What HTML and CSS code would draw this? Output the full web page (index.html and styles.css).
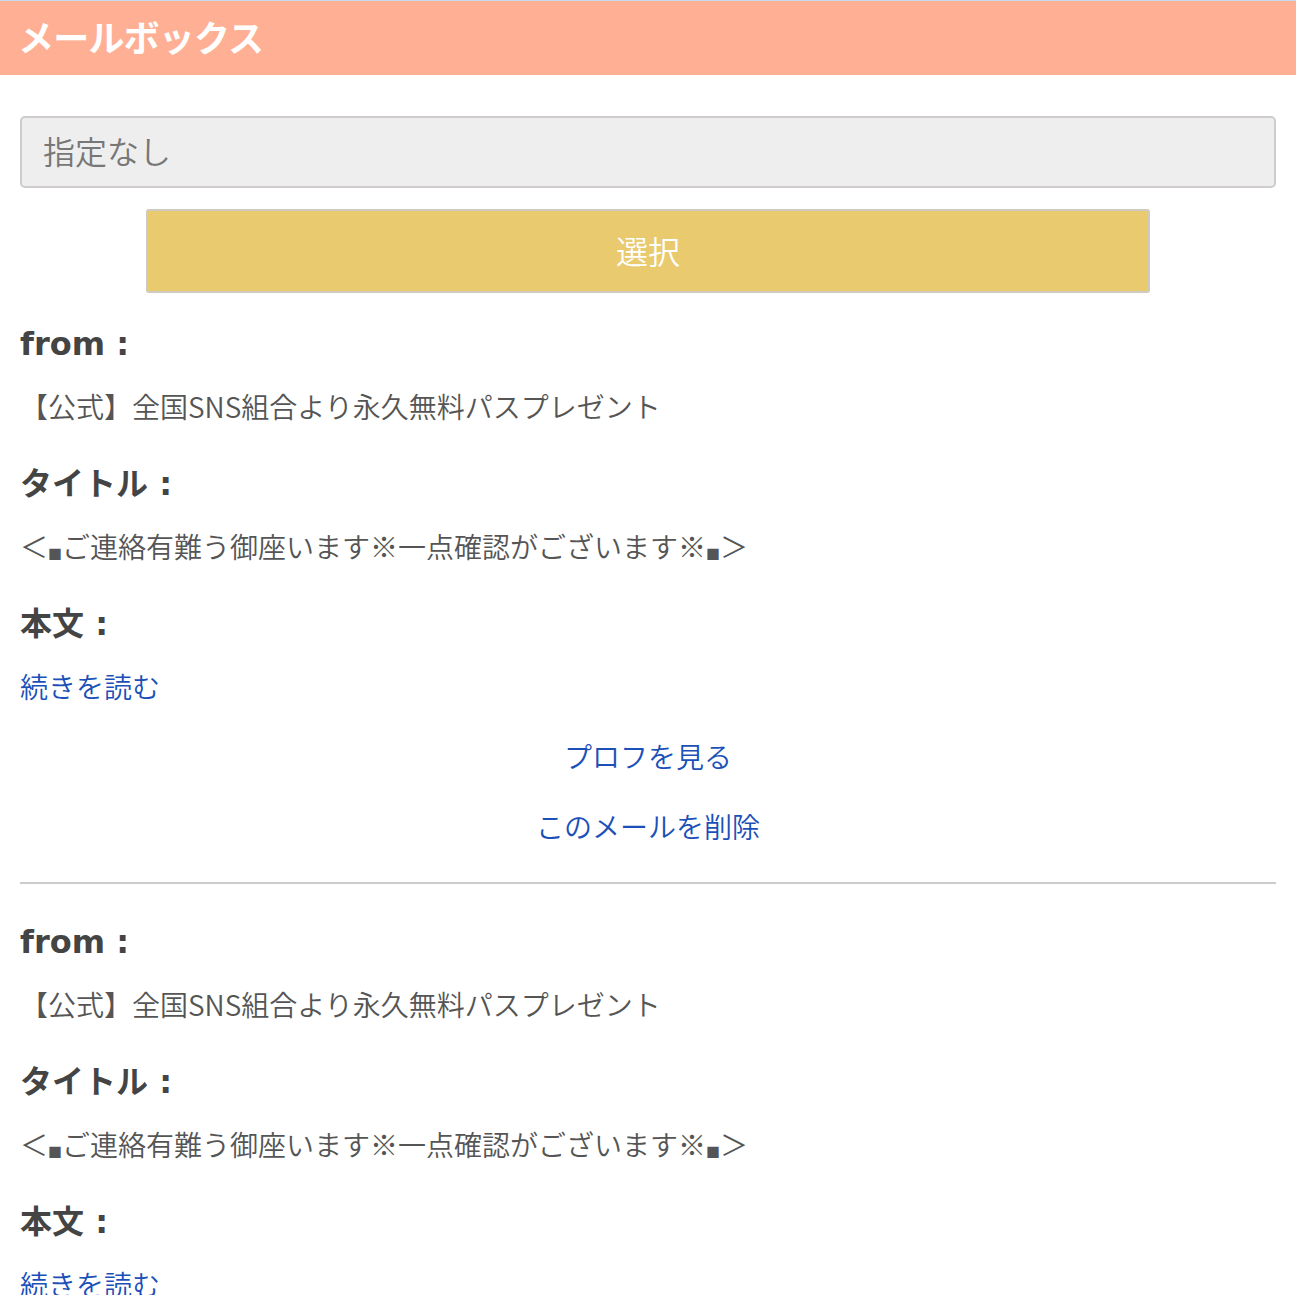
FILE: index.html
```html
<!DOCTYPE html>
<html lang="ja">
<head>
<meta charset="utf-8">
<title>メールボックス</title>
<link rel="stylesheet" href="styles.css">
</head>
<body>
<header class="header"><h1 class="header-title">メールボックス</h1></header>
<main class="content">
  <div class="select-box">指定なし</div>
  <div class="btn-row"><button class="btn-select">選択</button></div>

  <section class="mail">
    <h2 class="label">from :</h2>
    <p class="value">【公式】全国SNS組合より永久無料パスプレゼント</p>
    <h2 class="label">タイトル :</h2>
    <p class="value">＜<span class="sq">■</span>ご連絡有難う御座います※一点確認がございます※<span class="sq">■</span>＞</p>
    <h2 class="label">本文 :</h2>
    <p class="value"><a class="link" href="#">続きを読む</a></p>
    <p class="action action-first"><a class="link" href="#">プロフを見る</a></p>
    <p class="action"><a class="link" href="#">このメールを削除</a></p>
  </section>
  <hr class="divider">
  <section class="mail">
    <h2 class="label">from :</h2>
    <p class="value">【公式】全国SNS組合より永久無料パスプレゼント</p>
    <h2 class="label">タイトル :</h2>
    <p class="value">＜<span class="sq">■</span>ご連絡有難う御座います※一点確認がございます※<span class="sq">■</span>＞</p>
    <h2 class="label">本文 :</h2>
    <p class="value"><a class="link" href="#">続きを読む</a></p>
    <p class="action action-first"><a class="link" href="#">プロフを見る</a></p>
    <p class="action"><a class="link" href="#">このメールを削除</a></p>
  </section>
</main>
</body>
</html>
```
FILE: styles.css
```css
html, body {
  margin: 0;
  padding: 0;
  background: #fff;
}
body {
  font-family: "DejaVu Sans", "Noto Sans CJK JP", sans-serif;
  color: #555;
  border-top: 1px solid #c4dcef;
}
.header {
  background: #ffaf93;
  height: 74px;
  display: flex;
  align-items: center;
  padding: 0 18px;
}
.header-title {
  margin: 0 0 4px;
  font-family: "Noto Sans CJK JP", sans-serif;
  font-weight: 700;
  font-size: 36px;
  line-height: 40px;
  color: #fff;
  letter-spacing: -0.8px;
}
.content {
  padding: 41px 20px 0;
}
.select-box {
  box-sizing: border-box;
  height: 72px;
  background: #eeeeee;
  border: 2px solid #d0cccc;
  border-radius: 5px;
  display: flex;
  align-items: center;
  padding-left: 21px;
  padding-bottom: 5px;
  font-family: "Noto Sans CJK JP", sans-serif;
  font-weight: 350;
  font-size: 32px;
  color: #777;
}
.btn-row {
  display: flex;
  justify-content: center;
  margin-top: 21px;
}
.btn-select {
  box-sizing: border-box;
  width: 80%;
  height: 84px;
  background: #e9ca6e;
  border: 2px solid #cfcac0;
  border-radius: 3px;
  color: #fff;
  font-family: "Noto Sans CJK JP", sans-serif;
  font-weight: 350;
  font-size: 32px;
  padding: 0 0 3px;
}
.mail {
  padding-top: 31px;
}
.label {
  margin: 0;
  font-size: 32px;
  line-height: 40px;
  font-weight: 700;
  color: #444;
}
.value {
  margin: 22px 0 38px;
  font-family: "Noto Sans CJK JP", sans-serif;
  font-weight: 350;
  font-size: 28px;
  line-height: 40px;
  color: #555;
}
.sq {
  display: inline-block;
  font-size: 14px;
  line-height: 1;
  width: 14px;
  text-align: center;
  vertical-align: -1px;
}
.value:nth-of-type(3) {
  margin-bottom: 0;
}
.action {
  margin: 30px 0 0;
  text-align: center;
  font-family: "Noto Sans CJK JP", sans-serif;
  font-weight: 350;
  font-size: 28px;
  line-height: 40px;
}
.link {
  color: #1b50b8;
  text-decoration: none;
}
.divider {
  border: 0;
  height: 2px;
  background: #cccccc;
  margin: 36px 0 0;
}
.divider + .mail {
  padding-top: 38px;
}
```
